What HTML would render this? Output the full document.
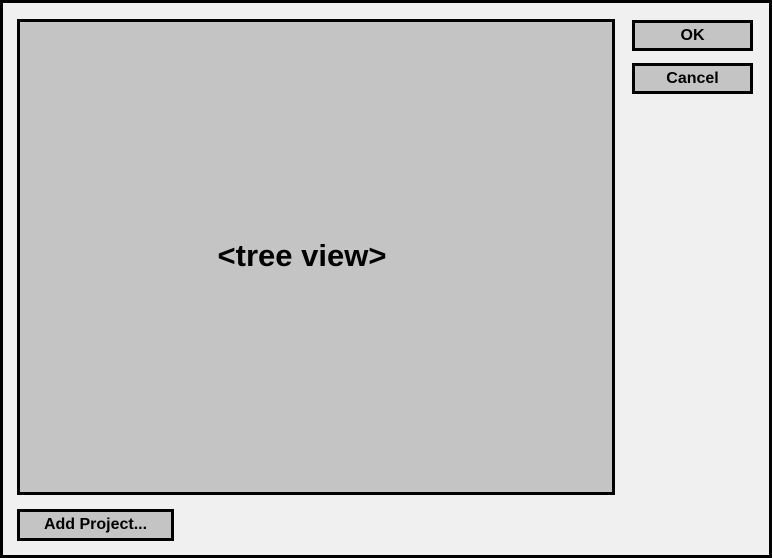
<!DOCTYPE html>
<html><head><style>
html,body{margin:0;padding:0}
body{width:772px;height:558px;position:relative;background:#f0f0f0;font-family:"Liberation Sans",Arial,sans-serif;overflow:hidden}
.frame{position:absolute;left:0;top:0;width:766px;height:552px;border:3px solid #000}
.box{position:absolute;box-sizing:border-box;border:3px solid #000;background:#c4c4c4;display:flex;align-items:center;justify-content:center;font-weight:bold;color:#000}
</style></head><body>
<div class="frame"></div>
<div class="box" style="left:17px;top:19px;width:598px;height:476px;"></div>
<div style="position:absolute;left:202px;top:236px;width:200px;text-align:center;font-size:31px;font-weight:bold;line-height:40px;">&lt;tree view&gt;</div>
<div class="box" style="left:632px;top:20px;width:121px;height:31px;font-size:16px;">OK</div>
<div class="box" style="left:632px;top:63px;width:121px;height:31px;font-size:16px;">Cancel</div>
<div class="box" style="left:17px;top:509px;width:157px;height:32px;font-size:16px;">Add Project...</div>
</body></html>
